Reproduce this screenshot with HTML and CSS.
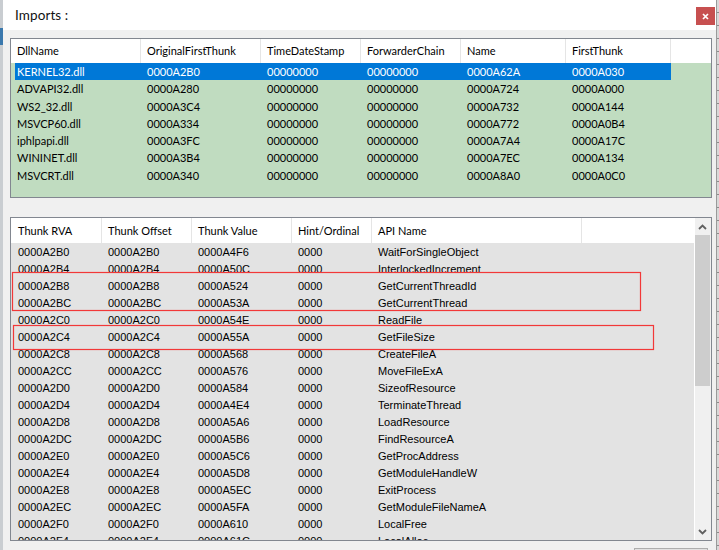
FILE: index.html
```html
<!DOCTYPE html>
<html>
<head>
<meta charset="utf-8">
<link rel="stylesheet" href="styles.css">
</head>
<body>
<div class="screen">
  <div class="edge-left"><div class="edge-blue"></div></div>
  <div class="window">
    <div class="titlebar">
      <span class="title">Imports :</span>
      <div class="close">
        <svg width="7" height="7" viewBox="0 0 7 7"><path d="M1 1 L6 6 M6 1 L1 6" stroke="#fff" stroke-width="1.7" fill="none"/></svg>
      </div>
    </div>
    <div class="content">
      <div class="dll-table">
        <div class="dll-head">
          <div class="hc c1">DllName</div>
          <div class="hc c2">OriginalFirstThunk</div>
          <div class="hc c3">TimeDateStamp</div>
          <div class="hc c4">ForwarderChain</div>
          <div class="hc c5">Name</div>
          <div class="hc c6">FirstThunk</div>
          <div class="hc cx"></div>
        </div>
        <div class="dll-body">
          <div class="drow sel"><div class="dc d1">KERNEL32.dll</div><div class="dc d2">0000A2B0</div><div class="dc d3">00000000</div><div class="dc d4">00000000</div><div class="dc d5">0000A62A</div><div class="dc d6">0000A030</div></div>
          <div class="drow"><div class="dc d1">ADVAPI32.dll</div><div class="dc d2">0000A280</div><div class="dc d3">00000000</div><div class="dc d4">00000000</div><div class="dc d5">0000A724</div><div class="dc d6">0000A000</div></div>
          <div class="drow"><div class="dc d1">WS2_32.dll</div><div class="dc d2">0000A3C4</div><div class="dc d3">00000000</div><div class="dc d4">00000000</div><div class="dc d5">0000A732</div><div class="dc d6">0000A144</div></div>
          <div class="drow"><div class="dc d1">MSVCP60.dll</div><div class="dc d2">0000A334</div><div class="dc d3">00000000</div><div class="dc d4">00000000</div><div class="dc d5">0000A772</div><div class="dc d6">0000A0B4</div></div>
          <div class="drow"><div class="dc d1">iphlpapi.dll</div><div class="dc d2">0000A3FC</div><div class="dc d3">00000000</div><div class="dc d4">00000000</div><div class="dc d5">0000A7A4</div><div class="dc d6">0000A17C</div></div>
          <div class="drow"><div class="dc d1">WININET.dll</div><div class="dc d2">0000A3B4</div><div class="dc d3">00000000</div><div class="dc d4">00000000</div><div class="dc d5">0000A7EC</div><div class="dc d6">0000A134</div></div>
          <div class="drow"><div class="dc d1">MSVCRT.dll</div><div class="dc d2">0000A340</div><div class="dc d3">00000000</div><div class="dc d4">00000000</div><div class="dc d5">0000A8A0</div><div class="dc d6">0000A0C0</div></div>
        </div>
      </div>

      <div class="thunk-table">
        <div class="thunk-main">
          <div class="thunk-head">
            <div class="th t1">Thunk RVA</div>
            <div class="th t2">Thunk Offset</div>
            <div class="th t3">Thunk Value</div>
            <div class="th t4">Hint/Ordinal</div>
            <div class="th t5">API Name</div>
            <div class="th tx"></div>
          </div>
          <div class="thunk-body">
            <div class="trow"><div class="td t1">0000A2B0</div><div class="td t2">0000A2B0</div><div class="td t3">0000A4F6</div><div class="td t4">0000</div><div class="td t5">WaitForSingleObject</div></div>
            <div class="trow"><div class="td t1">0000A2B4</div><div class="td t2">0000A2B4</div><div class="td t3">0000A50C</div><div class="td t4">0000</div><div class="td t5">InterlockedIncrement</div></div>
            <div class="trow"><div class="td t1">0000A2B8</div><div class="td t2">0000A2B8</div><div class="td t3">0000A524</div><div class="td t4">0000</div><div class="td t5">GetCurrentThreadId</div></div>
            <div class="trow"><div class="td t1">0000A2BC</div><div class="td t2">0000A2BC</div><div class="td t3">0000A53A</div><div class="td t4">0000</div><div class="td t5">GetCurrentThread</div></div>
            <div class="trow"><div class="td t1">0000A2C0</div><div class="td t2">0000A2C0</div><div class="td t3">0000A54E</div><div class="td t4">0000</div><div class="td t5">ReadFile</div></div>
            <div class="trow"><div class="td t1">0000A2C4</div><div class="td t2">0000A2C4</div><div class="td t3">0000A55A</div><div class="td t4">0000</div><div class="td t5">GetFileSize</div></div>
            <div class="trow"><div class="td t1">0000A2C8</div><div class="td t2">0000A2C8</div><div class="td t3">0000A568</div><div class="td t4">0000</div><div class="td t5">CreateFileA</div></div>
            <div class="trow"><div class="td t1">0000A2CC</div><div class="td t2">0000A2CC</div><div class="td t3">0000A576</div><div class="td t4">0000</div><div class="td t5">MoveFileExA</div></div>
            <div class="trow"><div class="td t1">0000A2D0</div><div class="td t2">0000A2D0</div><div class="td t3">0000A584</div><div class="td t4">0000</div><div class="td t5">SizeofResource</div></div>
            <div class="trow"><div class="td t1">0000A2D4</div><div class="td t2">0000A2D4</div><div class="td t3">0000A4E4</div><div class="td t4">0000</div><div class="td t5">TerminateThread</div></div>
            <div class="trow"><div class="td t1">0000A2D8</div><div class="td t2">0000A2D8</div><div class="td t3">0000A5A6</div><div class="td t4">0000</div><div class="td t5">LoadResource</div></div>
            <div class="trow"><div class="td t1">0000A2DC</div><div class="td t2">0000A2DC</div><div class="td t3">0000A5B6</div><div class="td t4">0000</div><div class="td t5">FindResourceA</div></div>
            <div class="trow"><div class="td t1">0000A2E0</div><div class="td t2">0000A2E0</div><div class="td t3">0000A5C6</div><div class="td t4">0000</div><div class="td t5">GetProcAddress</div></div>
            <div class="trow"><div class="td t1">0000A2E4</div><div class="td t2">0000A2E4</div><div class="td t3">0000A5D8</div><div class="td t4">0000</div><div class="td t5">GetModuleHandleW</div></div>
            <div class="trow"><div class="td t1">0000A2E8</div><div class="td t2">0000A2E8</div><div class="td t3">0000A5EC</div><div class="td t4">0000</div><div class="td t5">ExitProcess</div></div>
            <div class="trow"><div class="td t1">0000A2EC</div><div class="td t2">0000A2EC</div><div class="td t3">0000A5FA</div><div class="td t4">0000</div><div class="td t5">GetModuleFileNameA</div></div>
            <div class="trow"><div class="td t1">0000A2F0</div><div class="td t2">0000A2F0</div><div class="td t3">0000A610</div><div class="td t4">0000</div><div class="td t5">LocalFree</div></div>
            <div class="trow"><div class="td t1">0000A2F4</div><div class="td t2">0000A2F4</div><div class="td t3">0000A61C</div><div class="td t4">0000</div><div class="td t5">LocalAlloc</div></div>
          </div>
        </div>
        <div class="scrollbar">
          <div class="sb-btn">
            <svg width="9" height="6" viewBox="0 0 9 6"><path d="M1 5 L4.5 1.5 L8 5" stroke="#606060" stroke-width="1.8" fill="none"/></svg>
          </div>
          <div class="sb-track"><div class="sb-thumb"></div></div>
          <div class="sb-btn">
            <svg width="9" height="6" viewBox="0 0 9 6"><path d="M1 1 L4.5 4.5 L8 1" stroke="#606060" stroke-width="1.8" fill="none"/></svg>
          </div>
        </div>
        <svg class="marks" width="660" height="150" viewBox="0 0 660 150">
          <rect x="1.5" y="54.5" width="628" height="38" fill="none" stroke="#f23838" stroke-width="1.2"/>
          <rect x="2.5" y="107.5" width="640" height="24" fill="none" stroke="#f23838" stroke-width="1.2"/>
        </svg>
      </div>

      <div class="btnrow"><div class="btn"></div></div>
    </div>
  </div>
  <div class="edge-right"></div>
</div>
</body>
</html>
```

FILE: styles.css
```css
html, body {
  margin: 0;
  padding: 0;
  background: #f0f0f0;
}

.screen {
  display: flex;
  width: 719px;
  height: 550px;
  overflow: hidden;
  font-family: Lato, "Liberation Sans", sans-serif;
  color: #000;
}

.edge-left {
  width: 3px;
  flex: none;
  background: #c9cdd1;
  display: flex;
  flex-direction: column;
}

.edge-blue {
  margin-top: 28px;
  height: 17px;
  background: #3a78ad;
}

.window {
  width: 713px;
  flex: none;
  display: flex;
  flex-direction: column;
  background: #f0f0f0;
}

.titlebar {
  height: 30px;
  flex: none;
  background: #fff;
  display: flex;
  align-items: center;
  justify-content: space-between;
  padding-left: 12px;
}

.title {
  font-size: 13.5px;
  color: #111;
  letter-spacing: 0.1px;
}

.close {
  align-self: flex-start;
  margin-top: 7px;
  margin-right: 1px;
  width: 19px;
  height: 18px;
  background: #c75050;
  display: flex;
  align-items: center;
  justify-content: center;
}

.close svg {
  display: block;
}

.content {
  display: flex;
  flex-direction: column;
  padding: 8px 4px 0 7px;
}

/* ---------- DLL table ---------- */
.dll-table {
  box-sizing: border-box;
  height: 160px;
  border: 1px solid #828790;
  background: #c0dcc0;
  display: flex;
  flex-direction: column;
  font-size: 11px;
}

.dll-head {
  display: flex;
  height: 24px;
  flex: none;
  background: #fff;
}

.hc {
  box-sizing: border-box;
  border-right: 1px solid #e5e5e5;
  padding-left: 6px;
  line-height: 24px;
  white-space: nowrap;
}

.c1 { width: 130px; }
.c2 { width: 120px; }
.c3 { width: 100px; }
.c4 { width: 100px; }
.c5 { width: 105px; }
.c6 { width: 105px; }
.cx { flex: 1; border-right: none; }

.dll-body {
  display: flex;
  flex-direction: column;
}

.drow {
  display: flex;
  height: 17.25px;
  flex: none;
  margin-left: 4px;
  width: 656px;
  line-height: 18px;
}

.drow.sel {
  background: #0078d7;
  color: #fff;
}

.dc {
  box-sizing: border-box;
  padding-left: 6px;
  white-space: nowrap;
}

.d1 { width: 126px; padding-left: 2px; }
.d2 { width: 120px; }
.d3 { width: 100px; }
.d4 { width: 100px; }
.d5 { width: 105px; }
.d6 { width: 105px; }

/* ---------- Thunk table ---------- */
.thunk-table {
  position: relative;
  box-sizing: border-box;
  margin-top: 19px;
  height: 324px;
  border: 1px solid #828790;
  display: flex;
  background: #e3e3e3;
}

.thunk-main {
  flex: 1;
  display: flex;
  flex-direction: column;
  overflow: hidden;
}

.thunk-head {
  display: flex;
  height: 25px;
  flex: none;
  background: #fff;
  font-size: 11px;
}

.th {
  box-sizing: border-box;
  border-right: 1px solid #e5e5e5;
  padding-left: 6px;
  line-height: 25px;
  white-space: nowrap;
}

.t1 { width: 91px; padding-left: 7px; }
.t2 { width: 90px; }
.t3 { width: 100px; }
.t4 { width: 80px; }
.t5 { width: 210px; }
.tx { flex: 1; border-right: none; }

.thunk-body {
  display: flex;
  flex-direction: column;
  padding-top: 1px;
  font-family: "Liberation Sans", Arial, sans-serif;
  font-size: 11px;
}

.trow {
  display: flex;
  height: 17px;
  flex: none;
  line-height: 17px;
}

.td {
  box-sizing: border-box;
  padding-left: 6px;
  white-space: nowrap;
}

.td.t1 { padding-left: 7px; }

.scrollbar {
  width: 17px;
  flex: none;
  box-sizing: border-box;
  border-left: 1px solid #fff;
  background: #f0f0f0;
  display: flex;
  flex-direction: column;
}

.sb-btn {
  height: 17px;
  flex: none;
  display: flex;
  align-items: center;
  justify-content: center;
  padding-right: 1px;
}

.sb-btn svg {
  display: block;
}

.sb-track {
  flex: 1;
  display: flex;
  flex-direction: column;
}

.sb-thumb {
  height: 151px;
  width: 15px;
  background: #cdcdcd;
}

.marks {
  position: absolute;
  left: 0;
  top: 0;
  pointer-events: none;
}

.btnrow {
  display: flex;
  justify-content: flex-end;
  margin-top: 7px;
  padding-right: 4px;
}

.btn {
  width: 74px;
  height: 12px;
  box-sizing: border-box;
  border: 1px solid #adadad;
  background: #e1e1e1;
}

.edge-right {
  width: 3px;
  flex: none;
  box-sizing: border-box;
  border-left: 1px solid #9a9a9a;
  background: repeating-linear-gradient(to bottom, #d8d8d8 0, #d8d8d8 12px, #8c8c8c 12px, #8c8c8c 13px);
}
```
